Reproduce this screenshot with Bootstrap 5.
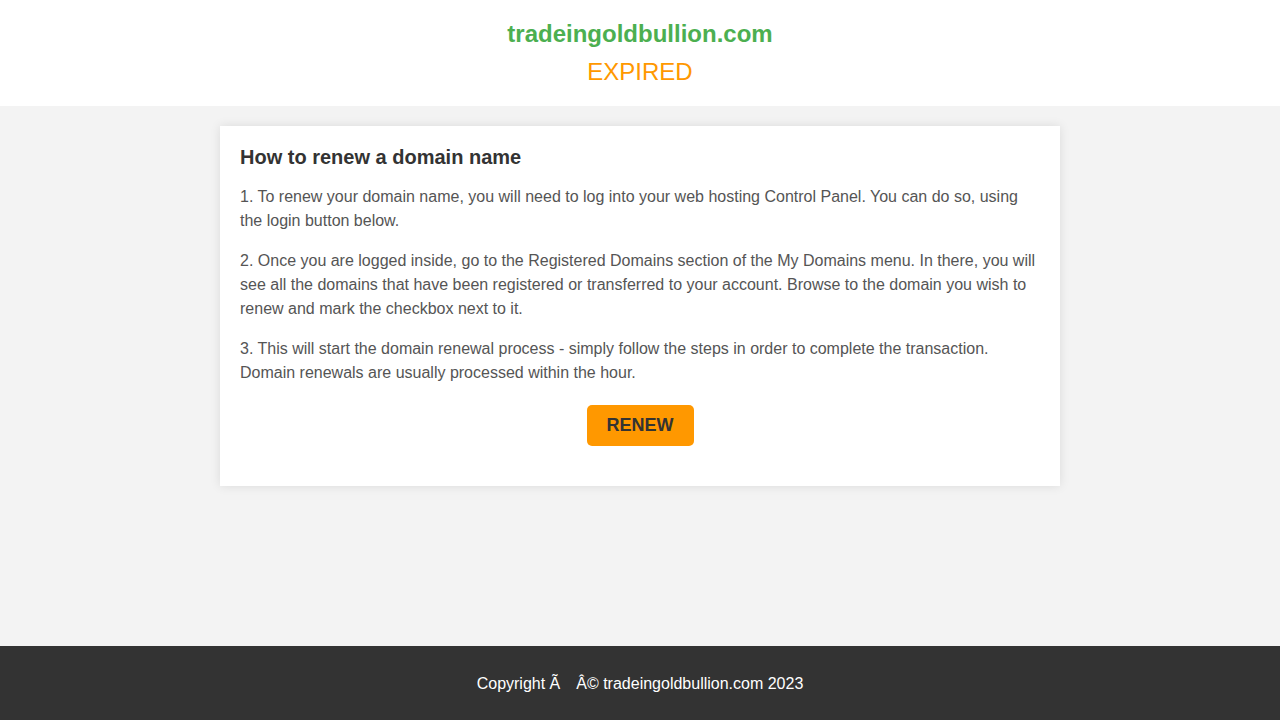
<!DOCTYPE html>
<html lang="en">
<head>
<meta charset="utf-8">
<meta name="viewport" content="width=device-width, initial-scale=1">
<title>tradeingoldbullion.com</title>
<link rel="stylesheet" href="https://cdn.jsdelivr.net/npm/bootstrap@5.3.0/dist/css/bootstrap.min.css">
<style>
body { font-family: "Liberation Sans", Arial, sans-serif; background: #f3f3f3; color: #333; }
.site-header { padding: 20px; }
.site-name { font-size: 24px; line-height: 28px; font-weight: 700; color: #4caf50; margin-bottom: 10px; }
.status { font-size: 24px; line-height: 28px; color: #ff9800; }
.panel { max-width: 840px; margin: 20px auto; padding: 20px; box-shadow: 0 0 10px rgba(0, 0, 0, .1); }
.panel h2 { font-size: 20px; line-height: 22px; font-weight: 700; margin-bottom: 17px; }
.panel p { line-height: 24px; color: #555; }
.actions { margin-bottom: 20px; }
.btn-renew { --bs-btn-bg: #ff9800; --bs-btn-color: #333; --bs-btn-hover-bg: #e68900; --bs-btn-hover-color: #333; --bs-btn-padding-x: 20px; --bs-btn-padding-y: 10px; --bs-btn-border-width: 0; --bs-btn-border-radius: 5px; font-size: 18px; line-height: 21px; font-weight: 700; }
.site-footer { background: #333; padding: 26px 20px 24px; }
</style>
</head>
<body class="d-flex flex-column min-vh-100">
<header class="site-header bg-white text-center">
  <h1 class="site-name">tradeingoldbullion.com</h1>
  <div class="status">EXPIRED</div>
</header>
<main class="flex-grow-1 px-3">
  <section class="panel bg-white">
    <h2>How to renew a domain name</h2>
    <p>1. To renew your domain name, you will need to log into your web hosting Control Panel. You can do so, using the login button below.</p>
    <p>2. Once you are logged inside, go to the Registered Domains section of the My Domains menu. In there, you will see all the domains that have been registered or transferred to your account. Browse to the domain you wish to renew and mark the checkbox next to it.</p>
    <p>3. This will start the domain renewal process - simply follow the steps in order to complete the transaction. Domain renewals are usually processed within the hour.</p>
    <div class="actions d-flex justify-content-center pt-1"><button type="button" class="btn btn-renew">RENEW</button></div>
  </section>
</main>
<footer class="site-footer text-white text-center">Copyright Ã&emsp;Â© tradeingoldbullion.com 2023</footer>
<script src="https://cdn.jsdelivr.net/npm/bootstrap@5.3.0/dist/js/bootstrap.bundle.min.js"></script>
</body>
</html>
